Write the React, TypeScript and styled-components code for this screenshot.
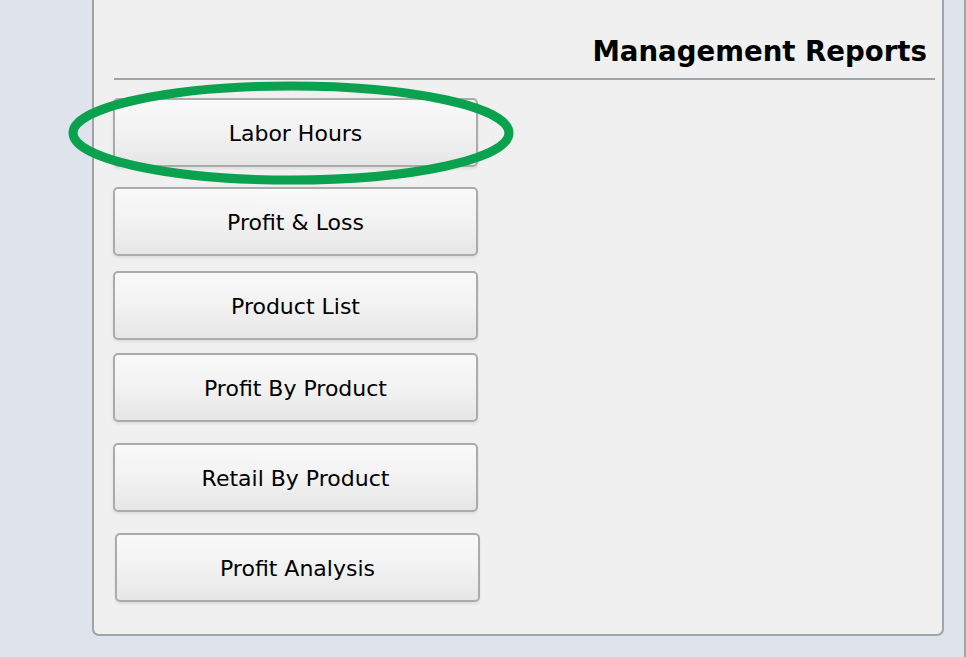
import React from "react";
import styled, { createGlobalStyle } from "styled-components";

const Global = createGlobalStyle`
  html, body { margin: 0; padding: 0; }
  body {
    background: #dfe4ec;
    font-family: "DejaVu Sans", Verdana, sans-serif;
    overflow: hidden;
  }
`;

const Page = styled.div`
  display: flex;
  align-items: flex-start;
  gap: 20px;
  padding-left: 92px;
  height: 657px;
  box-sizing: border-box;
`;

const Panel = styled.section`
  width: 852px;
  box-sizing: border-box;
  background: #f0f0f0;
  border: 2px solid #a0a4a8;
  border-top: none;
  border-radius: 0 0 7px 7px;
  padding: 30px 7px 32px 19px;
  display: flex;
  flex-direction: column;
`;

const NextPanel = styled.div`
  flex: 1;
  height: 657px;
  border-left: 2px solid #a0a4a8;
  background: #dfe4ec;
`;

const Heading = styled.h2`
  margin: 0 0 18px 1px;
  padding: 0 8px 4px 0;
  text-align: right;
  font-family: "DejaVu Sans", Verdana, sans-serif;
  font-weight: bold;
  font-size: 27.6px;
  line-height: 44px;
  color: #000;
  border-bottom: 2px solid #a0a4a8;
`;

const List = styled.div`
  display: flex;
  flex-direction: column;
  align-items: flex-start;
`;

const Slot = styled.div<{ $gap: number; $shift?: number }>`
  position: relative;
  margin-top: ${(p) => p.$gap}px;
  margin-left: ${(p) => p.$shift ?? 0}px;
`;

const ReportButton = styled.button`
  width: 365px;
  height: 69px;
  box-sizing: border-box;
  border: 2px solid #ababab;
  border-radius: 5px;
  background: linear-gradient(to bottom, #f9f9f9 0%, #f2f2f2 50%, #e6e6e6 100%);
  box-shadow: 0 2px 3px rgba(0, 0, 0, 0.08);
  font-family: "DejaVu Sans", Verdana, sans-serif;
  font-size: 22px;
  color: #000;
  padding: 2px 0 0 0;
  cursor: pointer;
`;

const Highlight = styled.svg`
  position: absolute;
  left: -46px;
  top: -17px;
  width: 448px;
  height: 104px;
  pointer-events: none;
  overflow: visible;
`;

const reports: { label: string; gap: number; shift?: number }[] = [
  { label: "Labor Hours", gap: 0 },
  { label: "Profit & Loss", gap: 20 },
  { label: "Product List", gap: 15 },
  { label: "Profit By Product", gap: 13 },
  { label: "Retail By Product", gap: 21 },
  { label: "Profit Analysis", gap: 21, shift: 2 },
];

export default function App() {
  return (
    <>
      <Global />
      <Page>
        <Panel>
          <Heading>Management Reports</Heading>
          <List>
            {reports.map((r, i) => (
              <Slot key={r.label} $gap={r.gap} $shift={r.shift}>
                <ReportButton>{r.label}</ReportButton>
                {i === 0 && (
                  <Highlight viewBox="0 0 448 104">
                    <ellipse
                      cx="224"
                      cy="52"
                      rx="218"
                      ry="47"
                      fill="none"
                      stroke="#0ba24f"
                      strokeWidth="9"
                    />
                  </Highlight>
                )}
              </Slot>
            ))}
          </List>
        </Panel>
        <NextPanel />
      </Page>
    </>
  );
}
